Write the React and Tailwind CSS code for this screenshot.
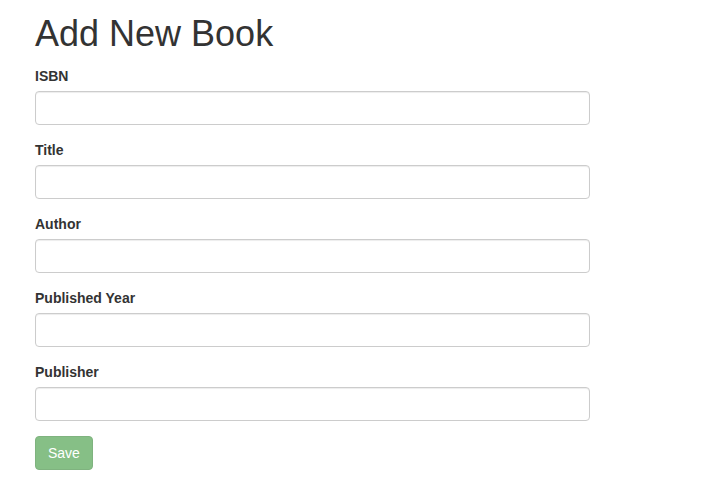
export default function App() {
  const fields = ["ISBN", "Title", "Author", "Published Year", "Publisher"];
  return (
    <div className="min-h-[504px] bg-white text-[#333] text-[14px] leading-[20px]" style={{ fontFamily: '"Liberation Sans", Arial, sans-serif' }}>
      <div className="pl-[35px] w-[590px] pt-[14px]">
        <h2 className="text-[36px] leading-[39.6px] font-normal mb-[12px]">Add New Book</h2>
        <form>
          {fields.map((f) => (
            <div key={f} className="mb-[15px]">
              <label className="block font-bold mb-[5px]">{f}</label>
              <input
                type="text"
                className="block w-full h-[34px] px-[12px] py-[6px] border border-[#ccc] rounded-[4px] shadow-[inset_0_1px_1px_rgba(0,0,0,0.075)] bg-white outline-none"
              />
            </div>
          ))}
          <button
            type="button"
            className="h-[34px] px-[12px] rounded-[4px] border border-[#7fb37f] bg-[#86bf86] text-white text-[14px]"
          >
            Save
          </button>
        </form>
      </div>
    </div>
  );
}
